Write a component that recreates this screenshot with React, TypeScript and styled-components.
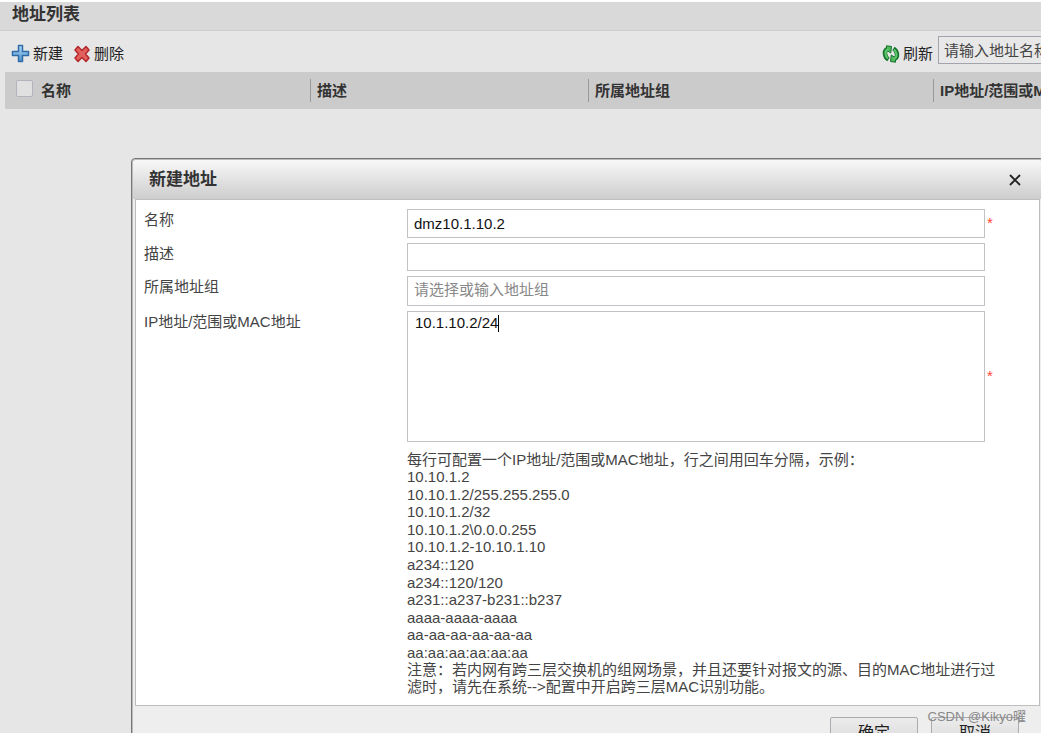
import React from 'react';
import styled, { createGlobalStyle } from 'styled-components';

const GlobalStyle = createGlobalStyle`
  *, *::before, *::after { box-sizing: border-box; }
  body {
    margin: 0;
    overflow: hidden;
    background: #e6e6e6;
    color: #444;
    font: 15px/17px "Liberation Sans", "Noto Sans CJK SC", sans-serif;
  }
  button, input, textarea { font: inherit; color: inherit; }
`;

const Page = styled.main`
  min-height: 100vh;
  overflow: hidden;
  border-top: 2px solid #fff;
`;

const PageTitle = styled.h1`
  margin: 0;
  padding: 0 12px;
  height: 29px;
  font-size: 17px;
  line-height: 26px;
  color: #333;
  background: #d9d9d9;
  border-bottom: 1px solid #ccc;
`;

const Toolbar = styled.div`
  display: flex;
  align-items: center;
  justify-content: space-between;
  height: 41px;
  padding-left: 11px;
`;

const ToolGroup = styled.div`
  display: flex;
  align-items: center;
  gap: 10px;
`;

const ToolButton = styled.button`
  display: flex;
  align-items: center;
  gap: 3px;
  padding: 4px 0 0;
  border: 0;
  background: none;
  color: #222;
  white-space: nowrap;
`;

const SearchArea = styled(ToolGroup)`
  gap: 5px;
  margin-right: -60px;
`;

const SearchInput = styled.input`
  width: 163px;
  height: 28px;
  margin-bottom: 3px;
  padding: 0 5px;
  border: 1px solid #a3a3ab;
  border-radius: 0;
  background: #e8e8e8;
  &::placeholder { color: #444; opacity: 1; }
`;

const ListTable = styled.table`
  width: calc(100% - 5px);
  margin-left: 5px;
  table-layout: fixed;
  border-collapse: collapse;
  background: #cbcbcb;
`;

const HeadCell = styled.th<{ $width?: number }>`
  width: ${(p) => (p.$width ? p.$width + 'px' : 'auto')};
  height: 37px;
  padding: 0;
  overflow: hidden;
  text-align: left;
  white-space: nowrap;
  color: #333;
`;

const HeadContent = styled.div<{ $first?: boolean }>`
  display: flex;
  align-items: center;
  gap: 8px;
  height: 23px;
  padding-left: ${(p) => (p.$first ? 11 : 6)}px;
  border-left: ${(p) => (p.$first ? '0' : '1px solid #999')};
`;

const CheckBox = styled.input`
  appearance: none;
  flex: none;
  width: 17px;
  height: 17px;
  margin: 0 0 4px;
  border: 1px solid #b3b3bb;
  border-radius: 2px;
  background: #e0e0e0;
`;

const Dialog = styled.section`
  position: absolute;
  top: 158px;
  left: 131px;
  right: -3px;
  border: 1px solid #777;
  border-radius: 4px 4px 0 0;
  background: #eee;
  padding: 0 3px;
  box-shadow: inset 1px 1px 0 #bbb;
`;

const DialogHeader = styled.header`
  display: flex;
  align-items: center;
  justify-content: space-between;
  height: 40px;
  margin: 0 -2px;
  padding: 1px 21px 0 16px;
  background: linear-gradient(#f8f8f8, #cdcdcd);
  border-top: 1px solid #bbb;
  border-radius: 3px 3px 0 0;
`;

const DialogTitle = styled.h2`
  margin: 0;
  font-size: 17px;
  line-height: 24px;
  color: #333;
`;

const CloseButton = styled.button`
  display: flex;
  padding: 0;
  border: 0;
  background: none;
`;

const DialogBody = styled.div`
  display: grid;
  grid-template-columns: 263px 1fr 54px;
  row-gap: 5px;
  height: 507px;
  padding: 9px 0 0 8px;
  align-content: start;
  border: 1px solid #bdbdbd;
  background: #fff;
`;

const FieldLabel = styled.label`
  grid-column: 1;
  padding-top: 2px;
`;

const Field = styled.input`
  grid-column: 2;
  width: 100%;
  height: 28px;
  padding: 0 6px;
  border: 1px solid #c2c2c6;
  border-radius: 0;
  background: #fff;
  color: #111;
  &::placeholder { color: #888; opacity: 1; }
`;

const NameField = styled(Field)`
  height: 29px;
`;

const PickerField = styled(Field)`
  height: 30px;
  padding-bottom: 4px;
`;

const AreaWrap = styled.div`
  grid-column: 2;
  position: relative;
  display: flex;
`;

const Area = styled.textarea`
  width: 100%;
  height: 131px;
  padding: 2px 7px;
  border: 1px solid #c2c2c6;
  border-radius: 0;
  resize: none;
  color: #111;
`;

const Caret = styled.span`
  position: absolute;
  top: 4px;
  left: 91px;
  width: 1px;
  height: 17px;
  background: #000;
`;

const Required = styled.span`
  grid-column: 3;
  align-self: center;
  padding: 0 0 2px 2px;
  color: #f43;
`;

const Hint = styled.div`
  grid-column: 2 / 4;
  max-width: 600px;
  padding-top: 4px;
`;

const Paragraph = styled.p`
  margin: 0;
`;

const Samples = styled.ul`
  display: grid;
  align-content: space-between;
  min-height: 193px;
  margin: 0;
  padding: 0;
  list-style: none;
`;

const DialogFooter = styled.footer`
  display: flex;
  justify-content: flex-end;
  gap: 13px;
  padding: 11px 21px 12px;
`;

const ActionButton = styled.button`
  width: 88px;
  height: 30px;
  padding: 0;
  border: 1px solid #aaaab0;
  border-radius: 2px;
  background: linear-gradient(#ececec, #d8d8d8);
  color: #222;
  font-size: 16px;
`;

const Watermark = styled.span`
  position: absolute;
  right: 17px;
  bottom: 34px;
  font-size: 13px;
  color: #888;
`;

const PlusIcon = () => (
  <svg width="19" height="19" viewBox="0 0 19 19" aria-hidden="true">
    <defs>
      <linearGradient id="plus" x2="0" y2="1">
        <stop stopColor="#b0d8f4" />
        <stop offset="1" stopColor="#4c92cf" />
      </linearGradient>
    </defs>
    <path d="M7.500 1.500h4v6h6v4h-6v6h-4v-6h-6v-4h6z" fill="url(#plus)" stroke="#2f6da8" strokeWidth="1.500" strokeLinejoin="round" />
  </svg>
);

const DeleteIcon = () => (
  <svg width="18" height="18" viewBox="0 0 18 18" aria-hidden="true">
    <path d="M2 5l3-3.500 4 4 4-4L16 5l-3.500 4L16 13l-3 3.500-4-4-4 4L2 13l3.500-4z" fill="#e2615d" stroke="#b3272b" strokeWidth="1.500" strokeLinejoin="round" />
  </svg>
);

const RefreshIcon = () => (
  <svg width="18" height="18" viewBox="0 0 18 18" aria-hidden="true">
    <g id="half">
      <path d="M6.500 14.500C2.500 12 1.500 5.500 5.500 4" fill="none" stroke="#14702a" strokeWidth="4.400" />
      <path d="M4.500 .8l5 .7-.8 6.500-4.200-3z" fill="#4dbb5c" stroke="#14702a" strokeLinejoin="round" />
      <path d="M6 13.500C3 11 2.200 6 6 4" fill="none" stroke="#5cc46a" strokeWidth="2.200" />
    </g>
    <use href="#half" transform="rotate(180 9 9)" />
  </svg>
);

const CloseIcon = () => (
  <svg width="12" height="12" viewBox="0 0 12 12" aria-hidden="true">
    <path d="M1 1l10 10m0-10L1 11" stroke="#222" strokeWidth="1.800" />
  </svg>
);

const samples = [
  '10.10.1.2',
  '10.10.1.2/255.255.255.0',
  '10.10.1.2/32',
  '10.10.1.2\\0.0.0.255',
  '10.10.1.2-10.10.1.10',
  'a234::120',
  'a234::120/120',
  'a231::a237-b231::b237',
  'aaaa-aaaa-aaaa',
  'aa-aa-aa-aa-aa-aa',
  'aa:aa:aa:aa:aa:aa',
];

export default function App() {
  return (
    <Page>
      <GlobalStyle />
      <PageTitle>地址列表</PageTitle>
      <Toolbar>
        <ToolGroup>
          <ToolButton type="button"><PlusIcon />新建</ToolButton>
          <ToolButton type="button"><DeleteIcon />删除</ToolButton>
        </ToolGroup>
        <SearchArea>
          <ToolButton type="button"><RefreshIcon />刷新</ToolButton>
          <SearchInput type="text" aria-label="地址名称" placeholder="请输入地址名称" />
        </SearchArea>
      </Toolbar>
      <ListTable>
        <thead>
          <tr>
            <HeadCell $width={305}>
              <HeadContent $first>
                <CheckBox type="checkbox" id="all" />
                <label htmlFor="all">名称</label>
              </HeadContent>
            </HeadCell>
            <HeadCell $width={278}><HeadContent>描述</HeadContent></HeadCell>
            <HeadCell $width={345}><HeadContent>所属地址组</HeadContent></HeadCell>
            <HeadCell><HeadContent>IP地址/范围或MAC地址</HeadContent></HeadCell>
          </tr>
        </thead>
      </ListTable>

      <Dialog role="dialog" aria-labelledby="dialog-title">
        <DialogHeader>
          <DialogTitle id="dialog-title">新建地址</DialogTitle>
          <CloseButton type="button" aria-label="关闭"><CloseIcon /></CloseButton>
        </DialogHeader>
        <DialogBody>
          <FieldLabel htmlFor="name">名称</FieldLabel>
          <NameField id="name" type="text" defaultValue="dmz10.1.10.2" />
          <Required>*</Required>
          <FieldLabel htmlFor="desc">描述</FieldLabel>
          <Field id="desc" type="text" />
          <FieldLabel htmlFor="group">所属地址组</FieldLabel>
          <PickerField id="group" type="text" placeholder="请选择或输入地址组" />
          <FieldLabel htmlFor="address">IP地址/范围或MAC地址</FieldLabel>
          <AreaWrap>
            <Area id="address" defaultValue="10.1.10.2/24" />
            <Caret />
          </AreaWrap>
          <Required>*</Required>
          <Hint>
            <Paragraph>每行可配置一个IP地址/范围或MAC地址，行之间用回车分隔，示例：</Paragraph>
            <Samples>
              {samples.map((s) => <li key={s}>{s}</li>)}
            </Samples>
            <Paragraph>
              注意：若内网有跨三层交换机的组网场景，并且还要针对报文的源、目的MAC地址进行过滤时，请先在系统--&gt;配置中开启跨三层MAC识别功能。
            </Paragraph>
          </Hint>
        </DialogBody>
        <DialogFooter>
          <ActionButton type="button">确定</ActionButton>
          <ActionButton type="button">取消</ActionButton>
        </DialogFooter>
        <Watermark>CSDN @Kikyo曜</Watermark>
      </Dialog>
    </Page>
  );
}
